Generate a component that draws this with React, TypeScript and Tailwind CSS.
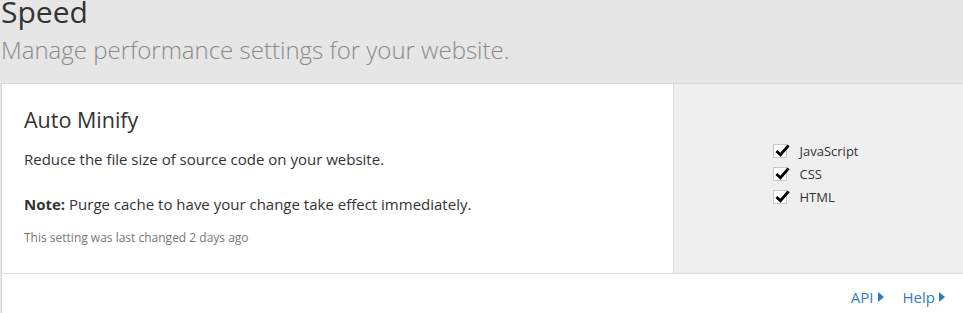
import React from 'react';

const options = ['JavaScript', 'CSS', 'HTML'];

const CheckIcon = () => (
  <svg viewBox="0 0 16 16" className="absolute -top-[2px] left-[1px] h-[15px] w-[15px]">
    <path d="M1.5 8.5 L5.8 12.5 L14.5 2.5" fill="none" stroke="#000" strokeWidth="3" strokeLinejoin="miter" />
  </svg>
);

const Caret = () => (
  <svg viewBox="0 0 6 10" className="ml-[4px] inline-block h-[10px] w-[6px]">
    <path d="M0 0 L6 5 L0 10 Z" fill="#2f7bbf" />
  </svg>
);

export default function App() {
  return (
    <div
      className="min-h-screen overflow-hidden bg-[#e6e6e6] text-[#333]"
      style={{ fontFamily: '"Open Sans", "Liberation Sans", sans-serif' }}
    >
      {/* Page header */}
      <div className="pl-[1px]">
        <h1 className="-mt-[3px] text-[30px] leading-[30px] font-normal text-[#333]">Speed</h1>
        <p className="mt-[8px] text-[24px] leading-[30px] font-light text-[#8a8a8a]">
          Manage performance settings for your website.
        </p>
      </div>

      {/* Auto Minify card */}
      <div className="mt-[18px] ml-[1px] w-[963px] border border-[#dadada] bg-white">
        <div className="flex h-[189px]">
          <div className="w-[671px] px-[22px] pt-[21px]">
            <h2 className="text-[21.5px] leading-[30px] font-normal text-[#333]">Auto Minify</h2>
            <p className="mt-[14px] text-[15px] leading-[20px] text-[#333]">
              Reduce the file size of source code on your website.
            </p>
            <p className="mt-[25px] text-[15px] leading-[20px] text-[#333]">
              <span className="font-bold">Note:</span> Purge cache to have your change take effect immediately.
            </p>
            <p className="mt-[16px] text-[12px] leading-[16px] text-[#777]">
              This setting was last changed 2 days ago
            </p>
          </div>
          <div className="flex flex-1 items-center justify-center border-l border-[#dadada] bg-[#efefef] pr-[6px]">
            <div className="flex flex-col gap-[9px] pb-[9px]">
              {options.map((o) => (
                <label key={o} className="flex items-center gap-[13px] text-[13px] leading-[14px] text-[#333]">
                  <span className="relative h-[14px] w-[14px] border border-[#c8c8c8] bg-white">
                    <CheckIcon />
                  </span>
                  {o}
                </label>
              ))}
            </div>
          </div>
        </div>
        <div className="flex h-[40px] items-center justify-end gap-[19px] border-t border-[#dadada] pr-[18px] pt-[7px] text-[15px] text-[#2f7bbf]">
          <a className="flex items-center">API<Caret /></a>
          <a className="flex items-center">Help<Caret /></a>
        </div>
      </div>
    </div>
  );
}
